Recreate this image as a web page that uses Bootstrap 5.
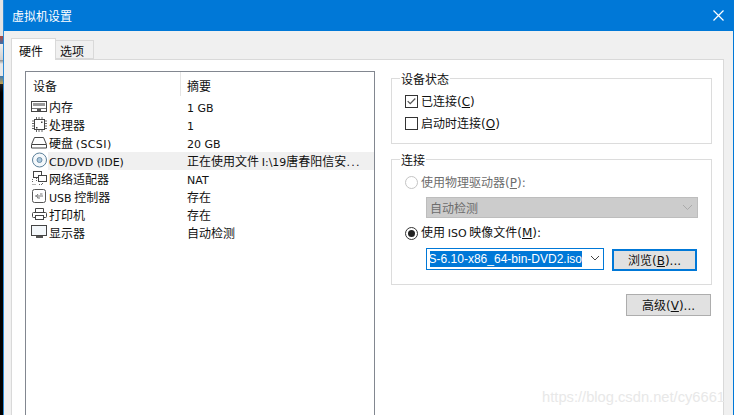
<!DOCTYPE html>
<html lang="zh">
<head>
<meta charset="utf-8">
<title>虚拟机设置</title>
<link href="https://cdn.jsdelivr.net/npm/bootstrap@5.3.0/dist/css/bootstrap.min.css" rel="stylesheet">
<style>
html,body{margin:0;height:415px;overflow:hidden;background:#fff}
body{font:12px/18px "Noto Sans CJK SC","Liberation Sans",sans-serif;color:#111}
.desk{width:734px;height:415px;background:linear-gradient(to bottom,#e4e4e4 0,#e4e4e4 36px,#b5483c 36px,#3c6ea8 44px,#eeeeee 44px,#d0d0d0 60px,#8c8c8c 60px,#e8e8e8 64px,#e8e8e8 76px,#3d78b0 76px,#c9a24a 84px,#202020 84px,#000 93px,#000 100%)}
.vmwin{margin-left:3px;width:731px;height:415px;background:#f0f0f0;border-right:1px solid #0078d7;border-left:1px solid #2b8ad6}
.tbar{height:31px;background:#0078d7;color:#fff;padding-left:8px;padding-right:9px;font-size:12px;line-height:31px}
.tabrow{height:29px;padding:7px 0 0 7px}
.hwtab{height:22px;width:45px;background:#fff;border:1px solid #d9d9d9;border-bottom:0;padding-left:7px;line-height:23px;position:relative;z-index:1}
.opttab{height:19px;width:38px;margin-top:2px;background:#f0f0f0;border:1px solid #d9d9d9;border-left:0;padding-left:4px;line-height:20px}
.sheet{margin-left:7px;width:713px;height:356px;background:#fff;border-top:1px solid #d9d9d9;border-left:1px solid #d9d9d9;border-right:1px solid #d9d9d9;padding:11px 0 0 13px;margin-top:-1px;position:relative}
.devbox{width:350px;height:345px;border:1px solid #828790;flex:none}
.devhead{height:26px}
.hd1{width:155px;padding-left:7px;border-right:1px solid #e5e5e5;height:24px;line-height:28px}
.hd2{padding-left:6px;line-height:28px}
.devrow{height:18px;padding-left:5px}
.devrow svg{flex:none;width:17px;height:16px}
.devmain{flex:1 1 auto;display:flex;margin-right:0;line-height:18px}
.devmain.sel{background:#f0f0f0}
.devname{width:136px;padding-left:1px;white-space:nowrap;flex:none}
.devval{padding-left:3px;white-space:nowrap}
.lat{font-family:"DejaVu Sans",sans-serif;font-size:11px}
.wide{letter-spacing:.4px}
.dots{letter-spacing:1.3px}
.keyl{font-family:"DejaVu Sans",sans-serif;font-size:12px}
.sidecol{width:321px;margin-left:16px;flex:none}
.grp{border:1px solid #dcdcdc;position:relative}
.grp-a{height:66px;margin-top:7px;padding:13px 0 0 13px}
.grp-b{height:126px;margin-top:15px;padding:13px 0 0 13px}
.grptitle{position:absolute;left:8px;top:-9px;background:#fff;padding:0 1px;line-height:18px}
.optline{display:flex;align-items:center;gap:3px;height:18px}
.optline.off{color:#6d6d6d}
.optline+.optline{margin-top:4px}
.optline.isoline{margin-top:6px}
.tick{width:13px;height:13px;border:1px solid #333;background:#fff;flex:none;display:block}
.dot{width:13px;height:13px;border:1px solid #333;border-radius:50%;flex:none;display:flex;align-items:center;justify-content:center}
.dot i{width:7px;height:7px;background:#222;border-radius:50%}
.dot.off{border-color:#c4c4c4}
.acc{color:inherit;text-decoration:underline;text-underline-offset:1px}
.autosel{margin:6px 0 0 21px;width:272px;height:21px;background:#cccccc;border:1px solid #bdbdbd;color:#6d6d6d;padding-left:3px;line-height:19px}
.isorow{margin:6px 0 0 21px;height:22px}
.isosel{width:178px;height:22px;border:1px solid #0078d7;padding:2px 0 0 3px;overflow:hidden;background:#fff}
.isotxt{background:#0078d7;color:#fff;font-family:"Liberation Sans",sans-serif;line-height:16px;height:16px;white-space:nowrap;width:152px;overflow:hidden;direction:rtl;text-align:left;font-size:12px;flex:none}
.btnish{background:#e1e1e1;border:1px solid #adadad;color:#111;border-radius:0;font-size:12px;padding:0;line-height:18px}
.brz{width:85px;height:22px;margin:1px 0 0 8px;border:2px solid #0078d7}
.adv{width:85px;height:22px;margin:9px 0 0 235px;display:block}
.wm{position:absolute;right:-2px;bottom:9px;color:#e8e8e8;font:14.7px/18px "Liberation Sans",sans-serif;white-space:nowrap}
.chev{flex:none}
</style>
</head>
<body>
<div class="desk">
<div class="vmwin">
  <div class="tbar d-flex align-items-center justify-content-between">
    <span>虚拟机设置</span>
    <svg width="11" height="11" viewBox="0 0 11 11"><path d="M.5.5l10 10M10.500.5l-10 10" stroke="#fff" stroke-width="1.200" fill="none"/></svg>
  </div>
  <div class="tabrow d-flex">
    <div class="hwtab">硬件</div>
    <div class="opttab">选项</div>
  </div>
  <div class="sheet d-flex">
    <div class="devbox">
      <div class="devhead d-flex"><div class="hd1">设备</div><div class="hd2">摘要</div></div>
      <div class="devrow d-flex">
        <svg viewBox="0 0 17 16"><rect x=".5" y="3.500" width="15" height="10" fill="#fff" stroke="#444"/><rect x="2" y="5" width="12" height="3" fill="#9a9a9a"/><path d="M1 10.500h14" stroke="#777"/><path d="M6 11h4v2H6z" fill="#555"/></svg>
        <div class="devmain"><div class="devname">内存</div><div class="devval"><span class="lat">1 GB</span></div></div>
      </div>
      <div class="devrow d-flex">
        <svg viewBox="0 0 17 16"><rect x="3.500" y="3.500" width="10" height="10" fill="#fff" stroke="#444"/><path d="M1 5h2M1 7.500h2M1 10h2M1 12.500h2M14 5h2M14 7.500h2M14 10h2M14 12.500h2M5.500 1v2M8 1v2M11 1v2M5.500 14v2M8 14v2M11 14v2" stroke="#666"/><path d="M5 11h1.500v1.500H5zM10 5.500h1.500V7H10z" fill="#444"/></svg>
        <div class="devmain"><div class="devname">处理器</div><div class="devval"><span class="lat">1</span></div></div>
      </div>
      <div class="devrow d-flex">
        <svg viewBox="0 0 17 16"><path d="M3.500 3.500h9l3 7v3.500H.5v-3.500z" fill="#fff" stroke="#444"/><path d="M1 10.500h14" stroke="#444"/></svg>
        <div class="devmain"><div class="devname">硬盘 <span class="lat wide">(SCSI)</span></div><div class="devval"><span class="lat">20 GB</span></div></div>
      </div>
      <div class="devrow d-flex">
        <svg viewBox="0 0 17 16"><circle cx="8.500" cy="8" r="7" fill="#f4f8fb" stroke="#5a7f99"/><circle cx="8.500" cy="8" r="2.500" fill="#a9c6dc" stroke="#6b8da6"/></svg>
        <div class="devmain sel"><div class="devname"><span class="lat">CD/DVD (IDE)</span></div><div class="devval">正在使用文件 <span class="lat">I:\19</span>唐春阳信安<span class="lat dots">...</span></div></div>
      </div>
      <div class="devrow d-flex">
        <svg viewBox="0 0 17 16"><rect x="2.500" y="1.500" width="8" height="6" fill="#fff" stroke="#444"/><rect x="7.500" y="5.500" width="8" height="6" fill="#fff" stroke="#444"/><path d="M5.500 8v3M8 14.500h3.500V12M1.500 14.500h4M1.500 9v3" stroke="#666" stroke-dasharray="1 1" fill="none"/></svg>
        <div class="devmain"><div class="devname">网络适配器</div><div class="devval"><span class="lat">NAT</span></div></div>
      </div>
      <div class="devrow d-flex">
        <svg viewBox="0 0 17 16"><rect x="1.500" y="1.500" width="13" height="13" rx="2" fill="#fff" stroke="#555"/><path d="M4 8h8M9 6h2.500M6.500 10H9M7 6l-1.500 2 1.500 2" stroke="#777" fill="none"/></svg>
        <div class="devmain"><div class="devname"><span class="lat">USB</span> 控制器</div><div class="devval">存在</div></div>
      </div>
      <div class="devrow d-flex">
        <svg viewBox="0 0 17 16"><path d="M4.500 6V2.500h8V6" fill="#fff" stroke="#444"/><rect x="1.500" y="6.500" width="14" height="5" rx="1" fill="#fff" stroke="#444"/><rect x="4.500" y="9.500" width="8" height="4" fill="#fff" stroke="#444"/></svg>
        <div class="devmain"><div class="devname">打印机</div><div class="devval">存在</div></div>
      </div>
      <div class="devrow d-flex">
        <svg viewBox="0 0 17 16"><rect x=".5" y="1.500" width="15" height="10" fill="#f4f8fb" stroke="#444"/><path d="M5 13h7" stroke="#555" stroke-width="2"/></svg>
        <div class="devmain"><div class="devname">显示器</div><div class="devval">自动检测</div></div>
      </div>
    </div>
    <div class="sidecol">
      <div class="grp grp-a">
        <div class="grptitle">设备状态</div>
        <div class="optline"><svg class="tick" viewBox="0 0 13 13"><path d="M2 6l3 3 6-6" stroke="#555" stroke-width="1.500" fill="none"/></svg><span>已连接<span class="keyl">(<span class="acc">C</span>)</span></span></div>
        <div class="optline"><span class="tick"></span><span>启动时连接<span class="keyl">(<span class="acc">O</span>)</span></span></div>
      </div>
      <div class="grp grp-b">
        <div class="grptitle">连接</div>
        <div class="optline off"><span class="dot off"></span><span>使用物理驱动器<span class="keyl">(<span class="acc">P</span>):</span></span></div>
        <div class="autosel d-flex justify-content-between align-items-center"><span>自动检测</span><svg class="chev me-1" width="11" height="7" viewBox="0 0 11 7"><path d="M1 1l4.500 4.500L10 1" stroke="#aaa" fill="none"/></svg></div>
        <div class="optline isoline"><span class="dot"><i></i></span><span>使用 <span class="lat">ISO</span> 映像文件<span class="keyl">(<span class="acc">M</span>):</span></span></div>
        <div class="isorow d-flex">
          <div class="isosel d-flex"><div class="isotxt"><bdi>CentOS-6.10-x86_64-bin-DVD2.iso</bdi></div><svg class="chev ms-2 mt-1" width="10" height="6" viewBox="0 0 10 6"><path d="M1 1l4 4 4-4" stroke="#444" fill="none"/></svg></div>
          <button type="button" class="btnish brz">浏览<span class="keyl">(<span class="acc">B</span>)...</span></button>
        </div>
      </div>
      <button type="button" class="btnish adv">高级<span class="keyl">(<span class="acc">V</span>)...</span></button>
    </div>
    <div class="wm">https://blog.csdn.net/cy6661</div>
  </div>
</div>
</div>
<script src="https://cdn.jsdelivr.net/npm/bootstrap@5.3.0/dist/js/bootstrap.bundle.min.js"></script>
</body>
</html>
